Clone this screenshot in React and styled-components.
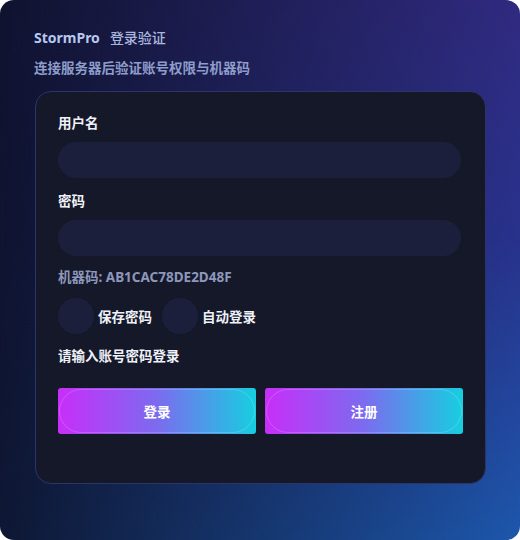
import React, { useState } from 'react';
import styled, { createGlobalStyle } from 'styled-components';

const GlobalStyle = createGlobalStyle`
  html, body {
    margin: 0;
    padding: 0;
    background: #ffffff;
  }
  * {
    box-sizing: border-box;
  }
`;

const Page = styled.div`
  width: 520px;
  height: 540px;
  border-radius: 14px;
  overflow: hidden;
  padding: 28px 34px 0;
  font-family: "Segoe UI", "Noto Sans", "Noto Sans CJK SC", sans-serif;
  background:
    linear-gradient(90deg, rgba(12, 16, 38, 0.9) 0%, rgba(12, 16, 38, 0.5) 45%, rgba(12, 16, 38, 0) 100%),
    linear-gradient(180deg, #302a80 0%, #28328c 45%, #1d57ac 100%);
`;

const TitleRow = styled.div`
  display: flex;
  align-items: center;
  gap: 10px;
  height: 20px;
  line-height: 20px;
  font-size: 14px;
`;

const Brand = styled.span`
  font-weight: 700;
  color: #b6c8f0;
`;

const TitleText = styled.span`
  font-weight: 500;
  color: #a9b7df;
`;

const Subtitle = styled.div`
  margin-top: 10px;
  line-height: 20px;
  font-size: 13.5px;
  font-weight: 600;
  color: #8f9dcb;
`;

const Card = styled.div`
  margin: 13px 0 0 1px;
  width: 451px;
  height: 393px;
  border: 1px solid #2b3568;
  border-radius: 16px;
  background: #151829;
  padding: 21px 22px 0;
  display: flex;
  flex-direction: column;
`;

const Label = styled.div`
  line-height: 20px;
  font-size: 13.5px;
  font-weight: 700;
  color: ${(p) => p.$muted ? '#8d97ba' : '#eef1f8'};
  margin-top: ${(p) => p.$top || 0}px;
`;

const Input = styled.input`
  margin-top: 9px;
  width: calc(100% - 2px);
  height: 36px;
  border: none;
  outline: none;
  border-radius: 18px;
  background: #1c1f3b;
  padding: 0 16px;
  font-size: 13px;
  color: #eef1f8;
  font-family: inherit;
`;

const CheckRow = styled.div`
  margin-top: 11px;
  display: flex;
  align-items: center;
  gap: 10px;
`;

const CheckItem = styled.label`
  display: flex;
  align-items: center;
  gap: 4px;
  cursor: pointer;
  font-size: 13.5px;
  font-weight: 700;
  color: #eef1f8;
`;

const Circle = styled.span`
  width: 36px;
  height: 36px;
  border-radius: 50%;
  background: ${(p) => p.$on ? '#3a3f7a' : '#1c1f3b'};
`;

const ButtonRow = styled.div`
  margin-top: 22px;
  display: grid;
  grid-template-columns: 1fr 1fr;
  gap: 9px;
`;

const GradientButton = styled.button`
  position: relative;
  height: 46px;
  border: none;
  border-radius: 3px;
  background: linear-gradient(90deg, #c82ef9 0%, #7c6bef 50%, #16cfe0 100%);
  color: #ffffff;
  font-family: inherit;
  font-size: 13.5px;
  font-weight: 700;
  cursor: pointer;

  &::after {
    content: '';
    position: absolute;
    inset: 1px;
    border-radius: 22px;
    border: 1px solid rgba(255, 255, 255, 0.18);
    pointer-events: none;
  }
`;

export default function App() {
  const [savePwd, setSavePwd] = useState(false);
  const [autoLogin, setAutoLogin] = useState(false);

  return (
    <>
      <GlobalStyle />
      <Page>
        <TitleRow>
          <Brand>StormPro</Brand>
          <TitleText>登录验证</TitleText>
        </TitleRow>
        <Subtitle>连接服务器后验证账号权限与机器码</Subtitle>
        <Card>
          <Label>用户名</Label>
          <Input type="text" />
          <Label $top={13}>密码</Label>
          <Input type="password" />
          <Label $top={11} $muted>机器码: AB1CAC78DE2D48F</Label>
          <CheckRow>
            <CheckItem onClick={() => setSavePwd(!savePwd)}>
              <Circle $on={savePwd} />
              保存密码
            </CheckItem>
            <CheckItem onClick={() => setAutoLogin(!autoLogin)}>
              <Circle $on={autoLogin} />
              自动登录
            </CheckItem>
          </CheckRow>
          <Label $top={12}>请输入账号密码登录</Label>
          <ButtonRow>
            <GradientButton>登录</GradientButton>
            <GradientButton>注册</GradientButton>
          </ButtonRow>
        </Card>
      </Page>
    </>
  );
}
